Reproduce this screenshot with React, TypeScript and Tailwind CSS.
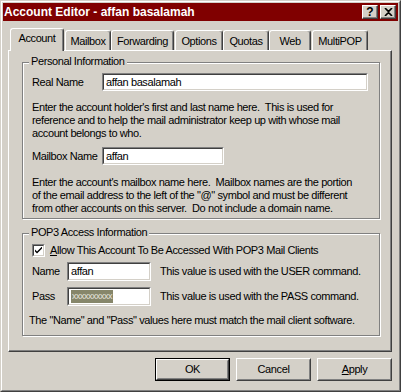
import React from "react";

const font = { fontFamily: '"Liberation Sans", Arial, sans-serif' };

function Sunken({ className, children }: { className?: string; children?: React.ReactNode }) {
  return (
    <div className={"shrink-0 border border-t-[#808080] border-l-[#808080] border-r-white border-b-white " + (className || "")}>
      <div className="h-full w-full border border-t-[#404040] border-l-[#404040] border-r-[#d4d0c8] border-b-[#d4d0c8] bg-white flex items-center px-[2px] text-[11px] text-black overflow-hidden whitespace-nowrap">
        {children}
      </div>
    </div>
  );
}

function Group({ title, className, children }: { title: string; className?: string; children?: React.ReactNode }) {
  return (
    <div className={"relative border border-[#808080] shadow-[inset_1px_1px_0_#ffffff,1px_1px_0_#ffffff] " + (className || "")}>
      <div className="absolute -top-[8px] left-[6px] bg-[#d4d0c8] px-[2px] text-[11px] leading-[13px] text-black whitespace-nowrap">{title}</div>
      {children}
    </div>
  );
}

function Tab({ label, w, selected }: { label: string; w: string; selected?: boolean }) {
  return (
    <div
      className={
        "flex items-center justify-center whitespace-nowrap rounded-t-[3px] border-l border-t border-l-white border-t-white border-r border-r-[#404040] shadow-[inset_-1px_0_0_#808080] bg-[#d4d0c8] text-[11px] text-black " +
        w +
        (selected ? " h-[23px] relative z-10 -mb-px pb-[3px]" : " h-[20px] pt-[1px]")
      }
    >
      {label}
    </div>
  );
}

function Button({ label, def, children }: { label?: string; def?: boolean; children?: React.ReactNode }) {
  return (
    <div className={"w-[75px] h-[23px] " + (def ? "border border-black" : "")}>
      <div className="h-full w-full border border-t-white border-l-white border-r-[#404040] border-b-[#404040]">
        <div className="h-full w-full border border-t-[#d4d0c8] border-l-[#d4d0c8] border-r-[#808080] border-b-[#808080] flex items-center justify-center text-[11px] text-black">
          {children ?? label}
        </div>
      </div>
    </div>
  );
}

function TitleBtn({ children }: { children: React.ReactNode }) {
  return (
    <div className="w-[16px] h-[14px] border border-t-white border-l-white border-r-[#404040] border-b-[#404040] bg-[#d4d0c8] flex items-center justify-center text-[12px] font-bold leading-none text-black shadow-[inset_-1px_-1px_0_#808080]">
      {children}
    </div>
  );
}

export default function App() {
  return (
    <div style={font} className="w-[401px] h-[392px] bg-[#d4d0c8] border border-t-[#d4d0c8] border-l-[#d4d0c8] border-r-[#404040] border-b-[#404040] overflow-hidden tracking-[-0.4px]">
      <div className="h-full w-full border border-t-white border-l-white border-r-[#808080] border-b-[#808080] p-px flex flex-col">
        {/* Title bar */}
        <div className="h-[18px] bg-[#800000] flex items-center justify-between pl-[1px] pr-[2px]">
          <span className="text-white font-bold text-[12px] tracking-normal">Account Editor - affan basalamah</span>
          <div className="flex gap-[2px] tracking-normal">
            <TitleBtn>?</TitleBtn>
            <TitleBtn>
              <svg width="9" height="8" viewBox="0 0 9 8">
                <path d="M1 0L4.5 3.5L8 0M1 8L4.5 4.5L8 8" stroke="black" strokeWidth="1.6" fill="none" />
              </svg>
            </TitleBtn>
          </div>
        </div>

        {/* Tabs */}
        <div className="ml-[5px] mt-[6px] flex items-end h-[23px]">
          <div className="ml-[2px]"><Tab label="Account" w="w-[54px]" selected /></div>
          <div className="ml-px"><Tab label="Mailbox" w="w-[46px]" /></div>
          <Tab label="Forwarding" w="w-[63px]" />
          <div className="ml-px"><Tab label="Options" w="w-[48px]" /></div>
          <Tab label="Quotas" w="w-[46px]" />
          <Tab label="Web" w="w-[42px]" />
          <div className="ml-px"><Tab label="MultiPOP" w="w-[56px]" /></div>
        </div>

        {/* Panel */}
        <div className="ml-[5px] w-[384px] h-[302px] border border-t-white border-l-white border-r-[#404040] border-b-[#404040]">
          <div className="h-full w-full border-r border-b border-r-[#808080] border-b-[#808080] pt-[11px] pl-[13px] text-[11px] leading-[13px] text-black">
            <Group title="Personal Information" className="w-[358px] h-[157px]">
              <div className="pl-[9px] pt-[10px]">
                <div className="flex items-center h-[18px]">
                  <span className="w-[70px] shrink-0 whitespace-nowrap">Real Name</span>
                  <Sunken className="w-[266px] h-[18px]">affan basalamah</Sunken>
                </div>
                <p className="mt-[10px] whitespace-nowrap">
                  Enter the account holder's first and last name here.&nbsp; This is used for<br />
                  reference and to help the mail administrator keep up with whose mail<br />
                  account belongs to who.
                </p>
                <div className="flex items-center h-[18px] mt-[7px]">
                  <span className="w-[70px] shrink-0 whitespace-nowrap">Mailbox Name</span>
                  <Sunken className="w-[122px] h-[18px]">affan</Sunken>
                </div>
                <p className="mt-[11px] whitespace-nowrap">
                  Enter the account's mailbox name here.&nbsp; Mailbox names are the portion<br />
                  of the email address to the left of the "@" symbol and must be different<br />
                  from other accounts on this server.&nbsp; Do not include a domain name.
                </p>
              </div>
            </Group>

            <Group title="POP3 Access Information" className="w-[358px] h-[103px] mt-[14px]">
              <div className="pl-[9px] pt-[10px]">
                <div className="flex items-center h-[13px] gap-[5px]">
                  <div className="w-[13px] h-[13px] border border-t-[#808080] border-l-[#808080] border-r-white border-b-white">
                    <div className="w-full h-full border border-t-[#404040] border-l-[#404040] border-r-[#d4d0c8] border-b-[#d4d0c8] bg-white flex items-center justify-center">
                      <svg width="7" height="7" viewBox="0 0 7 7">
                        <path d="M0 2.5L0 4.5L2 6.5L7 1.5L7 -0.5L2 4.5Z" fill="black" />
                      </svg>
                    </div>
                  </div>
                  <span className="whitespace-nowrap"><span className="underline">A</span>llow This Account To Be Accessed With POP3 Mail Clients</span>
                </div>
                <div className="flex items-center h-[19px] mt-[5px]">
                  <span className="w-[35px] shrink-0">Name</span>
                  <Sunken className="w-[84px] h-[19px]">affan</Sunken>
                  <span className="ml-[9px] whitespace-nowrap">This value is used with the USER command.</span>
                </div>
                <div className="flex items-center h-[19px] mt-[6px]">
                  <span className="w-[35px] shrink-0">Pass</span>
                  <Sunken className="w-[84px] h-[19px]">
                    <span className="bg-[#86866a] text-[#e4e4dc] text-[9px] leading-[13px] px-px tracking-[-0.5px]">xxxxxxxxxx</span>
                  </Sunken>
                  <span className="ml-[9px] whitespace-nowrap">This value is used with the PASS command.</span>
                </div>
                <p className="mt-[8px] -ml-[3px] whitespace-nowrap">The "Name" and "Pass" values here must match the mail client software.</p>
              </div>
            </Group>
          </div>
        </div>

        {/* Buttons */}
        <div className="ml-[5px] w-[384px] mt-[6px] flex justify-end gap-[6px]">
          <Button label="OK" def />
          <Button label="Cancel" />
          <Button>
            <span><span className="underline">A</span>pply</span>
          </Button>
        </div>
      </div>
    </div>
  );
}
